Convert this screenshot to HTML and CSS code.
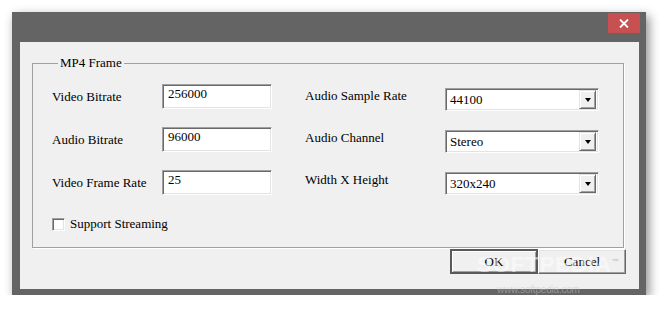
FILE: index.html
```html
<!DOCTYPE html>
<html lang="en">
<head>
    <meta charset="UTF-8">
    <meta name="viewport" content="width=device-width, initial-scale=1.0">
    <title>MP4 Frame</title>
    <link rel="stylesheet" href="styles.css">
</head>
<body>
<div class="window">
    <div class="titlebar">
        <button class="close" type="button" aria-label="Close">
            <svg width="10" height="9" viewBox="0 0 10 9">
                <path d="M1 0.5 L9 8.5 M9 0.5 L1 8.5" stroke="#fff" stroke-width="1.8" fill="none"/>
            </svg>
        </button>
    </div>

    <div class="client">
        <fieldset class="group">
            <legend>MP4 Frame</legend>
            <div class="fields">
                <div class="col col-left">
                    <label for="videoBitrate">Video Bitrate</label>
                    <div class="edit" id="videoBitrate">256000</div>

                    <label for="audioBitrate">Audio Bitrate</label>
                    <div class="edit" id="audioBitrate">96000</div>

                    <label for="frameRate">Video Frame Rate</label>
                    <div class="edit" id="frameRate">25</div>
                </div>

                <div class="col col-right">
                    <label>Audio Sample Rate</label>
                    <div class="combo"><span>44100</span><span class="drop"></span></div>

                    <label>Audio Channel</label>
                    <div class="combo"><span>Stereo</span><span class="drop"></span></div>

                    <label>Width X Height</label>
                    <div class="combo"><span>320x240</span><span class="drop"></span></div>
                </div>
            </div>

            <label class="check"><span class="box"></span>Support Streaming</label>
        </fieldset>

        <div class="actions">
            <button class="btn btn-default" type="button">OK</button>
            <button class="btn" type="button">Cancel</button>
        </div>
    </div>

    <!-- watermark from the source screenshot -->
    <div class="mark">SOFTPEDIA<sup>™</sup></div>
    <div class="mark-url">www.softpedia.com</div>
</div>
</body>
</html>
```

FILE: styles.css
```css
body {
    margin: 0;
    background: #fff;
    font-family: "Liberation Serif", "Times New Roman", serif;
    font-size: 13px;
    color: #000;
}
.window {
    position: relative;
    width: 634px;
    height: 283px;
    margin: 12px 0 0 12px;
    background: #646464;
    box-shadow: 3px 4px 10px rgba(0, 0, 0, 0.45);
    display: flex;
    flex-direction: column;
}
.titlebar {
    height: 30px;
    display: flex;
    justify-content: flex-end;
    align-items: flex-start;
}
.close {
    width: 32px;
    height: 20px;
    margin: 1px 6px 0 0;
    padding: 0;
    border: none;
    background: #c75050;
    display: flex;
    align-items: center;
    justify-content: center;
}
.client {
    height: 247px;
    margin: 0 7px 0 8px;
    padding: 0 15px 0 12px;
    background: #f0f0f0;
}
.group {
    margin: 13px 0 0;
    padding: 13px 0 15px 19px;
    border: 1px solid #a0a0a0;
    box-shadow: 1px 1px 0 #fff;
    line-height: 16px;
}
.group legend {
    margin-left: 6px;
    padding: 0 2px;
    line-height: 16px;
}
.group legend::first-line {
    line-height: 16px;
}
.fields {
    display: flex;
    gap: 33px;
}
.col {
    display: grid;
}
.col-left {
    grid-template-columns: 110px 110px;
    grid-auto-rows: 25px;
    row-gap: 18px;
}
.col-left label {
    align-self: center;
}
.col-right {
    padding-top: 4px;
    grid-template-columns: 140px 154px;
    grid-auto-rows: 23px;
    row-gap: 19px;
}
.col-right label {
    align-self: start;
}
.edit, .combo {
    box-sizing: border-box;
    background: #fff;
    border: 1px solid;
    border-color: #a0a0a0 #fff #fff #a0a0a0;
    box-shadow: inset 1px 1px 0 #696969, inset -1px -1px 0 #e3e3e3;
}
.edit {
    padding: 1px 5px;
}
.combo {
    display: flex;
    align-items: center;
    justify-content: space-between;
    padding: 2px 2px 2px 4px;
}
.drop {
    width: 17px;
    height: 19px;
    box-sizing: border-box;
    background: #f0f0f0;
    border: 1px solid;
    border-color: #e3e3e3 #696969 #696969 #e3e3e3;
    box-shadow: inset 1px 1px 0 #fff, inset -1px -1px 0 #a0a0a0;
    display: flex;
    align-items: center;
    justify-content: center;
}
.drop::after {
    content: "";
    border-top: 4px solid #000;
    border-left: 3.5px solid transparent;
    border-right: 3.5px solid transparent;
    margin-top: 1px;
}
.check {
    display: flex;
    align-items: center;
    gap: 5px;
    margin-top: 21px;
}
.box {
    width: 13px;
    height: 13px;
    box-sizing: border-box;
    background: #fff;
    border: 1px solid;
    border-color: #a0a0a0 #fff #fff #a0a0a0;
    box-shadow: inset 1px 1px 0 #696969, inset -1px -1px 0 #e3e3e3;
}
.actions {
    display: flex;
    justify-content: flex-end;
    margin: 1px -2px 0 0;
}
.btn {
    width: 88px;
    height: 25px;
    padding: 0;
    font: inherit;
    color: #000;
    background: #f0f0f0;
    border: 1px solid;
    border-color: #fff #696969 #696969 #fff;
    box-shadow: inset -1px -1px 0 #a0a0a0, inset 1px 1px 0 #e3e3e3;
}
.btn-default {
    border: 2px solid #5a5a5a;
    box-shadow: inset 1px 1px 0 #fff, inset -1px -1px 0 #a0a0a0;
}
.mark {
    position: absolute;
    left: 465px;
    top: 240px;
    font-family: "Liberation Sans", Arial, sans-serif;
    font-weight: bold;
    font-size: 22px;
    letter-spacing: 1px;
    color: rgba(255, 255, 255, 0.5);
    pointer-events: none;
}
.mark sup {
    font-size: 7px;
    color: rgba(160, 160, 160, 0.6);
}
.mark-url {
    position: absolute;
    left: 485px;
    top: 272px;
    font-family: "Liberation Sans", Arial, sans-serif;
    font-size: 10px;
    color: rgba(200, 200, 200, 0.5);
    letter-spacing: -0.2px;
}
```
